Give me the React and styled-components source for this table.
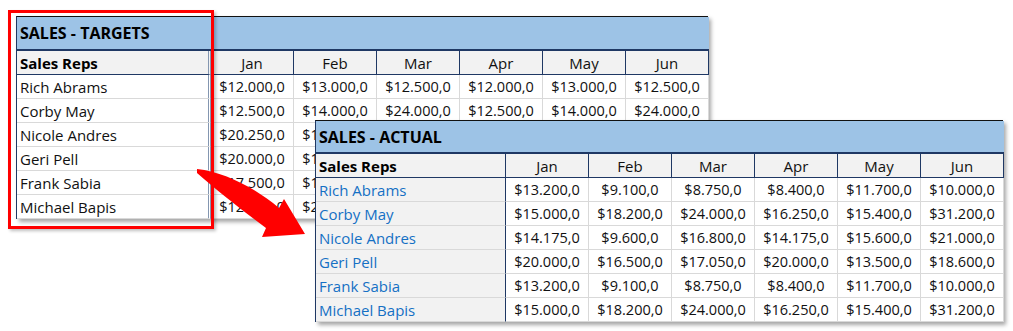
import React from "react";
import styled, { createGlobalStyle } from "styled-components";

const Global = createGlobalStyle`
  html, body { margin: 0; padding: 0; background: #ffffff; }
  body { font-family: "Open Sans", "Noto Sans", sans-serif; }
`;

const NAVY = "#1f3864";
const GRID = "#d9d9d9";
const BAND = "#9dc3e6";
const HEAD = "#f2f2f2";

const Stage = styled.div`
  position: relative;
  width: 1013px;
  height: 331px;
  padding: 16px 0 0 16px;
  box-sizing: border-box;
  overflow: hidden;
`;

const Sheet = styled.div`
  display: grid;
  grid-template-columns: ${(p) => p.$nameW}px repeat(6, 83px);
  width: ${(p) => p.$nameW + 6 * 83}px;
  border-top: 1px solid #111;
  border-left: 1px solid ${NAVY};
  background: #fff;
  box-shadow: 3px 3px 4px rgba(0, 0, 0, 0.35);
  box-sizing: border-box;
`;

const FloatingSheet = styled(Sheet)`
  position: absolute;
  left: 315px;
  top: 120px;
  z-index: 2;
`;

const TitleBand = styled.div`
  grid-column: 1 / -1;
  height: ${(p) => p.$h}px;
  background: ${BAND};
  border-bottom: 2px solid ${NAVY};
  box-sizing: border-box;
  display: flex;
  align-items: center;
  padding-left: 3px;
  font-weight: 700;
  font-size: 16px;
  color: #000;
`;

const Cell = styled.div`
  height: 24px;
  box-sizing: border-box;
  display: flex;
  align-items: center;
  justify-content: center;
  font-size: 14.5px;
  color: #111;
  white-space: nowrap;
  overflow: hidden;
  border-right: 1px solid ${GRID};
  border-bottom: 1px solid ${GRID};
`;

const HeadCell = styled(Cell)`
  background: ${HEAD};
  border-right: 1px solid ${NAVY};
  border-bottom: 1px solid ${NAVY};
  font-size: 15px;
  color: #111;
`;

const NameHead = styled(HeadCell)`
  justify-content: flex-start;
  padding-left: 3px;
  font-weight: 700;
  color: #000;
  border-right: ${(p) => (p.$plain ? `3px double #8496b0` : `1px solid ${NAVY}`)};
`;

const NameCell = styled(Cell)`
  justify-content: flex-start;
  padding-left: 3px;
  font-size: 15px;
  color: ${(p) => (p.$link ? "#1570c4" : "#111")};
  background: ${(p) => (p.$link ? HEAD : "#fff")};
  border-right: ${(p) => (p.$link ? `1px solid ${NAVY}` : `3px double #8496b0`)};
`;

const Frame = styled.div`
  position: absolute;
  left: 8px;
  top: 10px;
  width: 206px;
  height: 219px;
  border: 3px solid #ff0000;
  box-sizing: border-box;
  box-shadow: 2px 2px 3px rgba(0, 0, 0, 0.25);
  z-index: 1;
  pointer-events: none;
`;

const Arrow = styled.svg`
  position: absolute;
  left: 0;
  top: 0;
  z-index: 1;
  pointer-events: none;
`;

const months = ["Jan", "Feb", "Mar", "Apr", "May", "Jun"];

const targets = [
  ["Rich Abrams", [12000, 13000, 12500, 12000, 13000, 12500]],
  ["Corby May", [12500, 14000, 24000, 12500, 14000, 24000]],
  ["Nicole Andres", [20250, 15000, 16000, 14000, 15000, 20000]],
  ["Geri Pell", [20000, 16500, 17000, 20000, 14000, 18000]],
  ["Frank Sabia", [17500, 10000, 9000, 8500, 12000, 10000]],
  ["Michael Bapis", [12500, 20000, 24000, 16000, 15000, 30000]],
];

const actual = [
  ["Rich Abrams", [13200, 9100, 8750, 8400, 11700, 10000]],
  ["Corby May", [15000, 18200, 24000, 16250, 15400, 31200]],
  ["Nicole Andres", [14175, 9600, 16800, 14175, 15600, 21000]],
  ["Geri Pell", [20000, 16500, 17050, 20000, 13500, 18600]],
  ["Frank Sabia", [13200, 9100, 8750, 8400, 11700, 10000]],
  ["Michael Bapis", [15000, 18200, 24000, 16250, 15400, 31200]],
];

const money = (n) =>
  "$" + n.toString().replace(/\B(?=(\d{3})+(?!\d))/g, ".") + ",0";

function Table({ title, rows, link, nameW, bandH, as: Comp }) {
  return (
    <Comp $nameW={nameW}>
      <TitleBand $h={bandH}>{title}</TitleBand>
      <NameHead $plain={!link}>Sales Reps</NameHead>
      {months.map((m) => (
        <HeadCell key={m}>{m}</HeadCell>
      ))}
      {rows.map(([name, vals]) => (
        <React.Fragment key={name}>
          <NameCell $link={link}>{name}</NameCell>
          {vals.map((v, i) => (
            <Cell key={i}>{money(v)}</Cell>
          ))}
        </React.Fragment>
      ))}
    </Comp>
  );
}

export default function App() {
  return (
    <>
      <Global />
      <Stage>
        <Table
          as={Sheet}
          title="SALES - TARGETS"
          rows={targets}
          link={false}
          nameW={194}
          bandH={34}
        />
        <Frame />
        <Arrow width="1013" height="331" viewBox="0 0 1013 331">
          <path
            d="M197,169 C225,172 255,188 279,208 L284,199 L305,234 L262,237 L266,228 C242,210 216,190 197,173 Z"
            fill="#ff0000"
          />
        </Arrow>
        <Table
          as={FloatingSheet}
          title="SALES - ACTUAL"
          rows={actual}
          link={true}
          nameW={190}
          bandH={33}
        />
      </Stage>
    </>
  );
}
